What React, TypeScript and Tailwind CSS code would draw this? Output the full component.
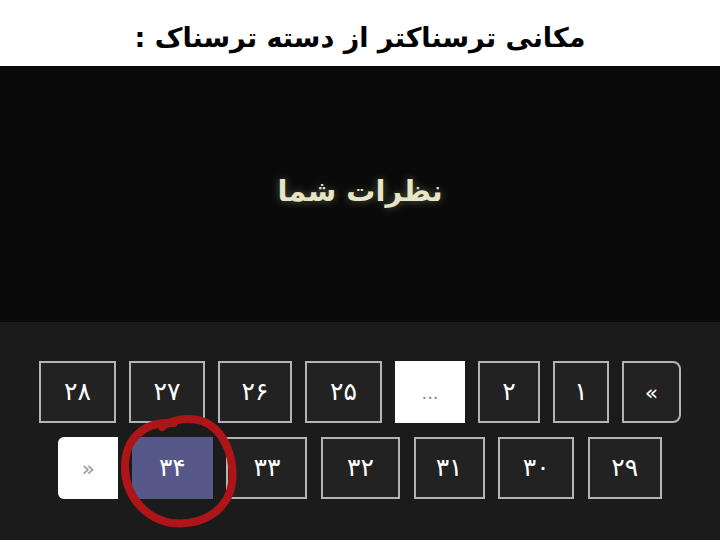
import React from 'react';

const row1 = [
  { label: '»', w: 'w-[59px]', kind: 'next' },
  { label: '۱', w: 'w-[56px]' },
  { label: '۲', w: 'w-[62px]' },
  { label: '...', w: 'w-[70px]', kind: 'dots' },
  { label: '۲۵', w: 'w-[77px]' },
  { label: '۲۶', w: 'w-[74px]' },
  { label: '۲۷', w: 'w-[76px]' },
  { label: '۲۸', w: 'w-[77px]' },
];

const row2 = [
  { label: '۲۹', w: 'w-[74px]' },
  { label: '۳۰', w: 'w-[76px]' },
  { label: '۳۱', w: 'w-[71px]' },
  { label: '۳۲', w: 'w-[79px]' },
  { label: '۳۳', w: 'w-[81px]' },
  { label: '۳۴', w: 'w-[81px]', kind: 'active' },
  { label: '«', w: 'w-[60px]', kind: 'prev' },
];

type Item = { label: string; w: string; kind?: string };

const PageButton = ({ item }: { item: Item }) => {
  let cls = 'border-2 border-[#b4b4b4] bg-[#222222] text-white text-[25px]';
  if (item.kind === 'dots') cls = 'bg-white text-[#888] text-[18px]';
  if (item.kind === 'prev') cls = 'bg-white text-[#999] text-[22px] rounded-l-md';
  if (item.kind === 'active') cls = 'bg-[#56588a] text-white text-[25px]';
  if (item.kind === 'next') cls = 'border-2 border-[#b4b4b4] bg-[#222222] text-white text-[22px] rounded-r-lg';
  return (
    <div className={`${item.w} h-[62px] flex items-center justify-center ${cls}`}>
      {item.label}
    </div>
  );
};

const App = () => {
  return (
    <div
      className="w-[720px] h-[540px] flex flex-col overflow-hidden bg-white"
      style={{ fontFamily: '"DejaVu Sans", "Noto Sans", sans-serif' }}
    >
      {/* title strip */}
      <div className="h-[66px] flex items-center justify-center pt-[10px]" dir="rtl">
        <span className="text-[27px] font-bold text-black tracking-tight">
          مکانی ترسناکتر از دسته ترسناک :
        </span>
      </div>

      {/* video area */}
      <div className="h-[256px] bg-[#0a0a0a] flex items-center justify-center pb-[4px]" dir="rtl">
        <span className="text-[29px] font-bold text-[#e6e6c6] [text-shadow:0_0_8px_rgba(230,230,190,0.35)]">
          نظرات شما
        </span>
      </div>

      {/* pagination */}
      <div className="relative flex-1 bg-[#1b1b1b] flex flex-col items-center pt-[39px] gap-[14px]">
        <div className="flex gap-[13px]" dir="rtl">
          {row1.map((it, i) => (
            <PageButton key={i} item={it} />
          ))}
        </div>
        <div className="flex gap-[13.6px]" dir="rtl">
          {row2.map((it, i) => (
            <PageButton key={i} item={it} />
          ))}
        </div>

        <svg
          className="absolute left-[114px] top-[93px]"
          width="130"
          height="116"
          viewBox="0 0 130 116"
          fill="none"
        >
          <path
            d="M60 8 C30 6 10 24 11 54 C12 82 32 104 58 108 C88 111 114 96 118 68 C121 42 110 14 88 6 C72 1 56 6 48 12"
            stroke="#ad1518"
            strokeWidth="8"
            strokeLinecap="round"
          />
        </svg>
      </div>
    </div>
  );
};

export default App;
